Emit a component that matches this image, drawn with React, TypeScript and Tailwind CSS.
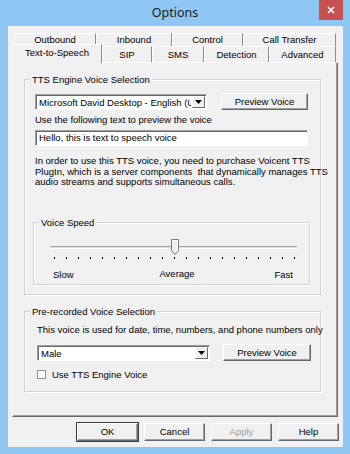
import React from "react";

const font = { fontFamily: '"Liberation Sans", Arial, sans-serif' };

function Tab({ label, w, selected }: { label: string; w: number; selected?: boolean }) {
  return (
    <div
      className={
        "flex items-center justify-center border-t border-l border-r border-t-white border-l-white border-r-[#8a8a8a] bg-[#f0f0f0] text-[9.5px] leading-none text-black whitespace-nowrap " +
        (selected ? "relative z-10 -mt-[2px] -mb-[1px] h-[19px] pb-[3px]" : "h-full")
      }
      style={{ width: w }}
    >
      {label}
    </div>
  );
}

function Btn({ children, w, h, disabled, def }: { children: React.ReactNode; w: number; h: number; disabled?: boolean; def?: boolean }) {
  return (
    <div
      className={
        "flex items-center justify-center bg-[#f0f0f0] text-[9.5px] leading-none whitespace-nowrap border border-t-white border-l-white border-r-[#696969] border-b-[#696969] shadow-[inset_-1px_-1px_0_#a0a0a0] " +
        (disabled ? "text-[#a0a0a0] " : "text-black ") +
        (def ? "outline outline-1 outline-[#3c3c3c]" : "")
      }
      style={{ width: w, height: h }}
    >
      {children}
    </div>
  );
}

function Select({ value, w }: { value: string; w: number }) {
  return (
    <div
      className="flex h-[16px] items-stretch bg-white border border-t-[#a0a0a0] border-l-[#a0a0a0] border-r-white border-b-white shadow-[inset_1px_1px_0_#696969]"
      style={{ width: w }}
    >
      <div className="min-w-0 flex-1 overflow-hidden whitespace-nowrap pl-[3px] pt-[1px] text-[9.5px] leading-[13px] text-black">{value}</div>
      <div className="m-[1px] flex w-[13px] shrink-0 items-center justify-center bg-[#f0f0f0] border border-t-white border-l-white border-r-[#696969] border-b-[#696969]">
        <svg width="7" height="4" viewBox="0 0 7 4">
          <path d="M0 0h7L3.5 4z" fill="#000" />
        </svg>
      </div>
    </div>
  );
}

function Group({ label, children, w, h, labelMl = 5 }: { label: string; children: React.ReactNode; w: number; h: number; labelMl?: number }) {
  return (
    <div
      className="flex flex-col border border-[#d0d0d0] shadow-[inset_1px_1px_0_#fff,1px_1px_0_#fff]"
      style={{ width: w, height: h }}
    >
      <div
        className="-mt-[6px] w-fit bg-[#f0f0f0] px-[2px] text-[9.5px] leading-[11px] text-black whitespace-nowrap"
        style={{ marginLeft: labelMl }}
      >
        {label}
      </div>
      {children}
    </div>
  );
}

export default function App() {
  const ticks = Array.from({ length: 21 });
  return (
    <div className="flex h-[454px] w-[350px] flex-col bg-[#8ec6f4]" style={font}>
      {/* Title bar */}
      <div className="relative flex h-[26px] items-center justify-center">
        <span className="text-[12.5px] text-[#1a1a1a]" style={{ fontFamily: '"Noto Sans", "Open Sans", sans-serif' }}>
          Options
        </span>
        <div className="absolute right-[7px] top-0 flex h-[20px] w-[24px] items-center justify-center bg-[#c75050]">
          <svg width="8" height="8" viewBox="0 0 8 8">
            <path d="M1 1l6 6M7 1l-6 6" stroke="#fff" strokeWidth="1.6" />
          </svg>
        </div>
      </div>

      {/* Body */}
      <div className="ml-[8px] mb-[7px] flex w-[335px] flex-1 flex-col bg-[#f0f0f0] pt-[7px]">
        {/* Tab row 1 */}
        <div className="ml-[6px] flex h-[13px]">
          <Tab label="Outbound" w={82} />
          <Tab label="Inbound" w={76} />
          <Tab label="Control" w={71} />
          <Tab label="Call Transfer" w={93} />
        </div>
        {/* Tab row 2 */}
        <div className="ml-[4px] flex h-[16px] items-start">
          <Tab label="Text-to-Speech" w={90} selected />
          <Tab label="SIP" w={50} />
          <Tab label="SMS" w={52} />
          <Tab label="Detection" w={65} />
          <Tab label="Advanced" w={67} />
        </div>

        {/* Panel */}
        <div className="ml-[4px] flex h-[355px] w-[326px] flex-col border border-t-white border-l-white border-r-[#696969] border-b-[#696969] shadow-[inset_-1px_-1px_0_#a0a0a0]">
          <div className="ml-[11px] mt-[16px]">
            <Group label="TTS Engine Voice Selection" w={297} h={216}>
              <div className="ml-[10px] mt-[8px] flex items-center gap-[14px]">
                <Select value="Microsoft David Desktop - English (United States)" w={172} />
                <Btn w={87} h={17}>Preview Voice</Btn>
              </div>
              <div className="ml-[10px] mt-[4px] text-[9.5px] leading-[11px] text-black whitespace-nowrap">Use the following text to preview the voice</div>
              <div className="ml-[10px] mt-[5px] flex h-[16px] w-[273px] items-center bg-white border border-t-[#a0a0a0] border-l-[#a0a0a0] border-r-white border-b-white shadow-[inset_1px_1px_0_#696969] pl-[3px] text-[9.5px] text-black whitespace-nowrap">
                Hello, this is text to speech voice
              </div>
              <div className="ml-[10px] mt-[10px] flex flex-col text-[9.5px] leading-[10.5px] text-black whitespace-nowrap">
                <span>In order to use this TTS voice, you need to purchase Voicent TTS</span>
                <span>PlugIn, which is a server components&nbsp; that dynamically manages TTS</span>
                <span>audio streams and supports simultaneous calls.</span>
              </div>
              <div className="ml-[8px] mt-[34px]">
                <Group label="Voice Speed" w={277} h={63}>
                  <div className="relative ml-[16px] mt-[18px] h-[3px] w-[247px] border-t border-t-[#a0a0a0] border-b border-b-white bg-[#e3e3e3]">
                    <svg className="absolute -top-[8px] left-[121px]" width="8" height="16" viewBox="0 0 8 16">
                      <path d="M0.5 0.5h7v11l-3.5 4l-3.5-4z" fill="#f0f0f0" stroke="#7a7a7a" />
                      <path d="M1.5 1.5h5v9.5" fill="none" stroke="#fff" />
                    </svg>
                  </div>
                  <div className="ml-[20px] mt-[8px] flex w-[241px] justify-between">
                    {ticks.map((_, i) => (
                      <div key={i} className="h-[2px] w-[1px] bg-black" />
                    ))}
                  </div>
                  <div className="ml-[19px] mt-[10px] flex w-[240px] items-center justify-between text-[9.5px] leading-[11px] text-black">
                    <span>Slow</span>
                    <span className="-mt-[2px] ml-[6px]">Average</span>
                    <span>Fast</span>
                  </div>
                </Group>
              </div>
            </Group>
          </div>

          <div className="ml-[11px] mt-[16px]">
            <Group label="Pre-recorded Voice Selection" w={297} h={81}>
              <div className="ml-[12px] mt-[7px] text-[9.5px] leading-[11px] text-black whitespace-nowrap">
                This voice is used for date, time, numbers, and phone numbers only
              </div>
              <div className="ml-[12px] mt-[9px] flex items-center gap-[13px]">
                <Select value="Male" w={173} />
                <Btn w={88} h={17}>Preview Voice</Btn>
              </div>
              <div className="ml-[12px] mt-[8px] flex items-center gap-[6px]">
                <div className="h-[9px] w-[9px] border border-[#8f8f8f] bg-white" />
                <span className="text-[9.5px] leading-[11px] text-black">Use TTS Engine Voice</span>
              </div>
            </Group>
          </div>
        </div>

        {/* Bottom buttons */}
        <div className="ml-[69px] mt-[6px] flex gap-[6px]">
          <Btn w={61} h={18} def>OK</Btn>
          <Btn w={61} h={18}>Cancel</Btn>
          <Btn w={61} h={18} disabled>Apply</Btn>
          <Btn w={61} h={18}>Help</Btn>
        </div>
      </div>
    </div>
  );
}
